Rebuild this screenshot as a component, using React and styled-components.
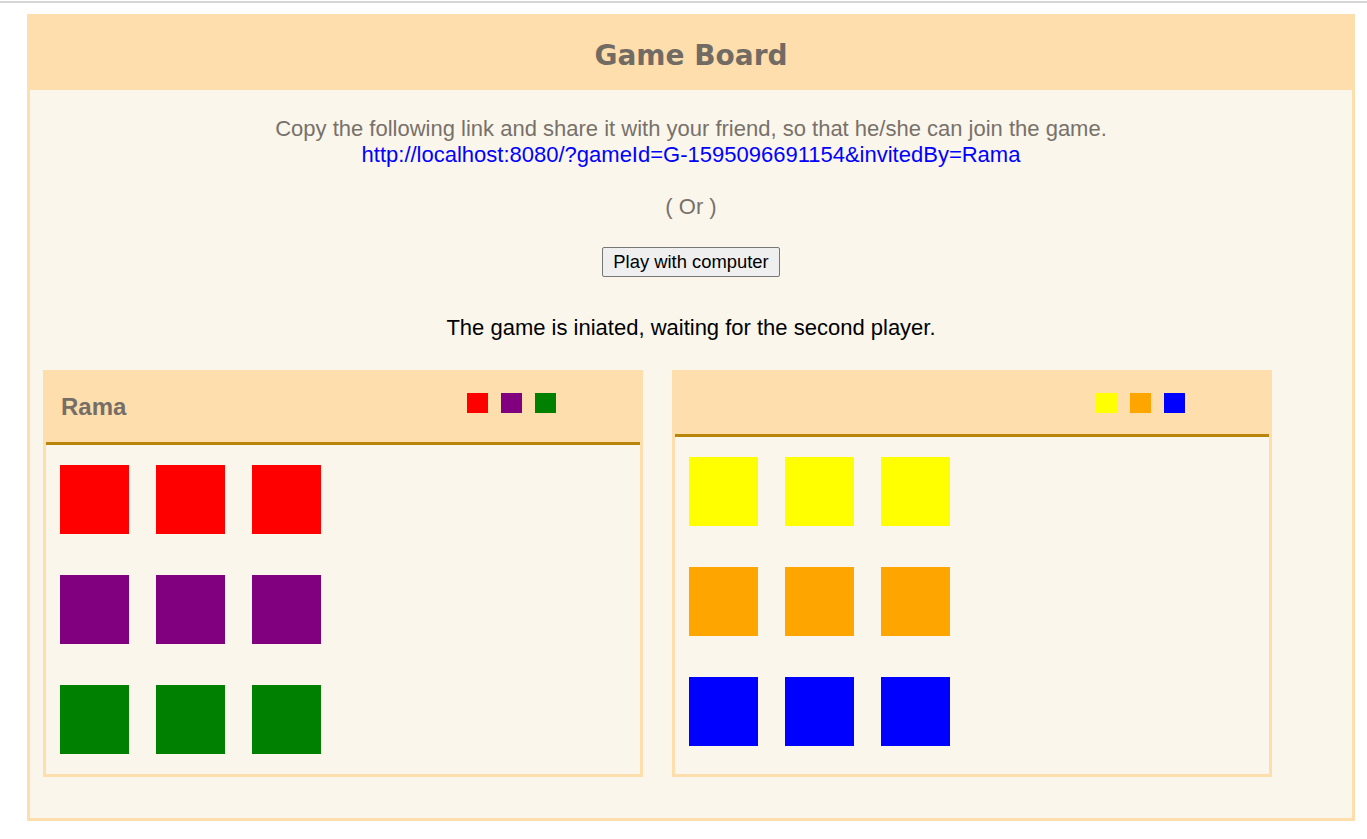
import React from "react";
import styled, { createGlobalStyle } from "styled-components";

const GlobalStyle = createGlobalStyle`
  html, body { margin: 0; padding: 0; background: #ffffff; }
  body { font-family: "Liberation Sans", Arial, sans-serif; }
`;

const Page = styled.div`
  margin-top: 1px;
  border-top: 2px solid #d6d6d6;
  padding-top: 11px;
  padding-bottom: 20px;
`;

const Board = styled.div`
  box-sizing: border-box;
  width: 1328px;
  margin-left: 27px;
  border: 3px solid #ffdead;
  background: #faf6ec;
`;

const BoardHeader = styled.div`
  height: 73px;
  background: #ffdead;
  display: flex;
  align-items: center;
  justify-content: center;
`;

const Title = styled.h1`
  margin: 0;
  padding-top: 4px;
  font-family: "Comic Sans MS", "DejaVu Sans", sans-serif;
  font-weight: bold;
  font-size: 28px;
  color: #726b64;
`;

const Content = styled.div`
  padding: 26px 0 41px;
  text-align: center;
`;

const Line = styled.p`
  margin: ${(p) => p.$top || 0}px 0 0;
  font-size: 22px;
  line-height: 26px;
  color: ${(p) => p.$color || "#78716a"};
`;

const Link = styled.span`
  color: #0000ff;
`;

const ButtonRow = styled.div`
  margin-top: 27px;
  display: flex;
  justify-content: center;
`;

const Button = styled.button`
  box-sizing: border-box;
  height: 30px;
  padding: 0 10px;
  font-family: "Liberation Sans", Arial, sans-serif;
  font-size: 18.4px;
  color: #000;
  background: #efefef;
  border: 1px solid #767676;
  border-radius: 2px;
`;

const Panels = styled.div`
  margin-top: 29px;
  padding-left: 13px;
  display: flex;
  gap: 29px;
  align-items: stretch;
  text-align: left;
`;

const Panel = styled.div`
  box-sizing: border-box;
  width: 600px;
  border: 3px solid #ffdead;
  background: #faf6ec;
`;

const PanelHeader = styled.div`
  display: flex;
  align-items: flex-start;
  padding: 20px 15px 21px;
  background: #ffdead;
  border-bottom: 3px solid #b8860b;
`;

const PlayerName = styled.div`
  width: 406px;
  font-size: 24px;
  line-height: 28px;
  font-weight: bold;
  color: #766e66;
`;

const Swatches = styled.div`
  display: flex;
  gap: 13px;
`;

const Swatch = styled.div`
  width: 21px;
  height: 20px;
  background: ${(p) => p.$color};
`;

const PanelBody = styled.div`
  padding: 20px 14px;
  display: grid;
  grid-template-columns: repeat(3, 69px);
  column-gap: 27px;
  row-gap: 41px;
`;

const Piece = styled.div`
  width: 69px;
  height: 69px;
  background: ${(p) => p.$color};
`;

const players = [
  { name: "Rama", colors: ["red", "purple", "green"] },
  { name: "", colors: ["yellow", "orange", "blue"] },
];

function PlayerPanel({ name, colors }) {
  return (
    <Panel>
      <PanelHeader>
        <PlayerName>{name}</PlayerName>
        <Swatches>
          {colors.map((c) => (
            <Swatch key={c} $color={c} />
          ))}
        </Swatches>
      </PanelHeader>
      <PanelBody>
        {colors.flatMap((c) =>
          [0, 1, 2].map((i) => <Piece key={c + i} $color={c} />)
        )}
      </PanelBody>
    </Panel>
  );
}

export default function App() {
  return (
    <>
      <GlobalStyle />
      <Page>
        <Board>
          <BoardHeader>
            <Title>Game Board</Title>
          </BoardHeader>
          <Content>
            <Line>
              Copy the following link and share it with your friend, so that
              he/she can join the game.
              <br />
              <Link>http://localhost:8080/?gameId=G-1595096691154&amp;invitedBy=Rama</Link>
            </Line>
            <Line $top={26}>( Or )</Line>
            <ButtonRow>
              <Button>Play with computer</Button>
            </ButtonRow>
            <Line $top={38} $color="#000">
              The game is iniated, waiting for the second player.
            </Line>
            <Panels>
              {players.map((p, i) => (
                <PlayerPanel key={i} name={p.name} colors={p.colors} />
              ))}
            </Panels>
          </Content>
        </Board>
      </Page>
    </>
  );
}
